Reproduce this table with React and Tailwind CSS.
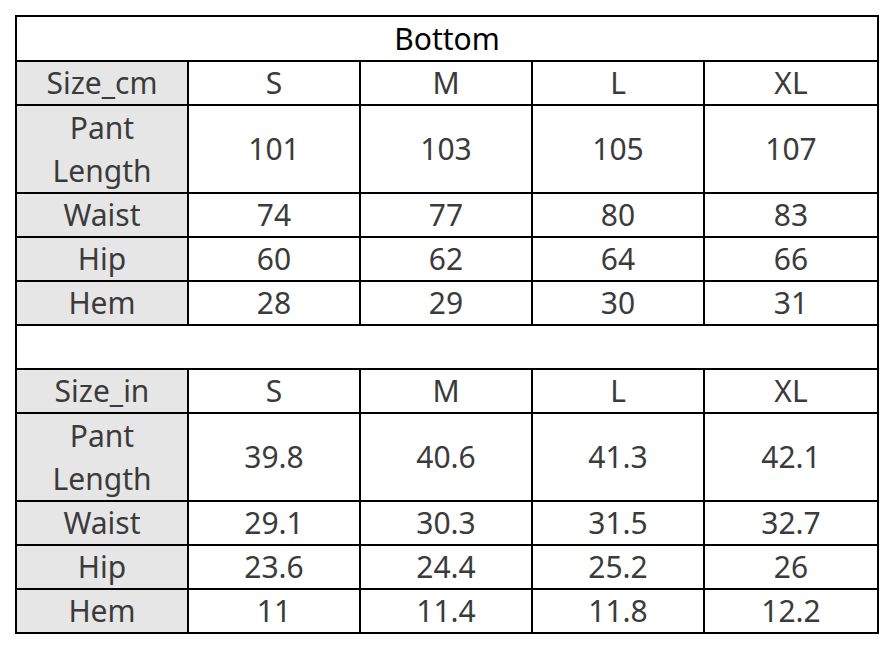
import React from 'react';

const cm = [
  ['Pant Length', '101', '103', '105', '107', true],
  ['Waist', '74', '77', '80', '83'],
  ['Hip', '60', '62', '64', '66'],
  ['Hem', '28', '29', '30', '31'],
];

const inch = [
  ['Pant Length', '39.8', '40.6', '41.3', '42.1', true],
  ['Waist', '29.1', '30.3', '31.5', '32.7'],
  ['Hip', '23.6', '24.4', '25.2', '26'],
  ['Hem', '11', '11.4', '11.8', '12.2'],
];

const cell = 'border-2 border-black text-center align-middle p-0';

function Header({ label }) {
  return (
    <tr className="h-[44px]">
      <td className={`${cell} bg-[#e7e6e6]`}>{label}</td>
      {['S', 'M', 'L', 'XL'].map((s) => (
        <td key={s} className={cell}>{s}</td>
      ))}
    </tr>
  );
}

function Rows({ data }) {
  return data.map(([name, ...rest]) => {
    const tall = rest[4];
    return (
      <tr key={name} className={tall ? 'h-[88px]' : 'h-[44px]'}>
        <td className={`${cell} bg-[#e7e6e6] ${tall ? 'px-8 leading-[43px]' : ''}`}>{name}</td>
        {rest.slice(0, 4).map((v, i) => (
          <td key={i} className={cell}>{v}</td>
        ))}
      </tr>
    );
  });
}

export default function App() {
  return (
    <div className="w-[892px] h-[648px] bg-white pt-[15px] pl-[15px]">
      <table
        className="table-fixed border-collapse w-[862px] text-[30px] leading-[42px] text-[#3b3b3b]"
        style={{ fontFamily: '"Noto Sans", "Open Sans", sans-serif' }}
      >
        <colgroup>
          <col className="w-[172px]" />
          <col className="w-[172px]" />
          <col className="w-[172px]" />
          <col className="w-[172px]" />
          <col className="w-[174px]" />
        </colgroup>
        <tbody>
          <tr className="h-[45px]">
            <td colSpan={5} className={`${cell} text-black`}>Bottom</td>
          </tr>
          <Header label="Size_cm" />
          <Rows data={cm} />
          <tr className="h-[44px]">
            <td colSpan={5} className={cell}></td>
          </tr>
          <Header label="Size_in" />
          <Rows data={inch} />
        </tbody>
      </table>
    </div>
  );
}
